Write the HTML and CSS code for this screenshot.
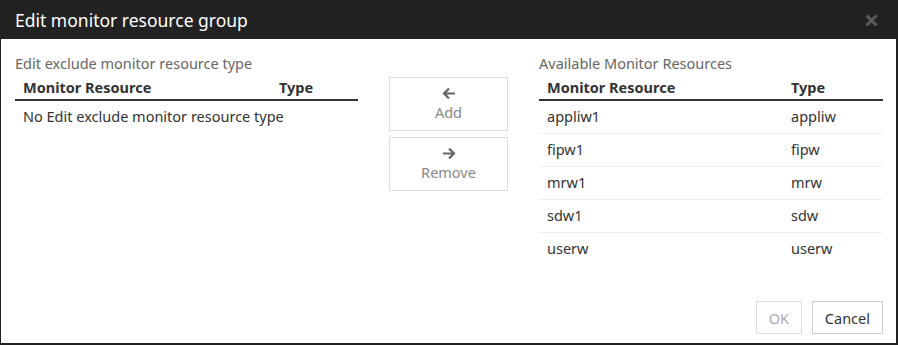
FILE: index.html
```html
<!DOCTYPE html>
<html>
<head>
<meta charset="utf-8">
<link rel="stylesheet" href="styles.css">
</head>
<body>
<div class="dialog">
  <div class="header">
    <span class="title">Edit monitor resource group</span>
    <svg class="close" width="13" height="13" viewBox="0 0 13 13"><path d="M1.5 1.5L11.5 11.5M11.5 1.5L1.5 11.5" stroke="#5a5a5a" stroke-width="3"/></svg>
  </div>
  <div class="body">
    <div class="panel left">
      <div class="label">Edit exclude monitor resource type</div>
      <div class="thead">
        <span class="c1">Monitor Resource</span><span class="c2">Type</span>
      </div>
      <div class="empty">No Edit exclude monitor resource type</div>
    </div>
    <div class="mid">
      <button class="mv">
        <svg class="arrow" width="14" height="13" viewBox="0 0 14 13"><path d="M13 6.5H2M7 1.5L2 6.5L7 11.5" fill="none" stroke="#666" stroke-width="2.2"/></svg>
        <span>Add</span>
      </button>
      <button class="mv">
        <svg class="arrow" width="14" height="13" viewBox="0 0 14 13"><path d="M1 6.5H12M7 1.5L12 6.5L7 11.5" fill="none" stroke="#666" stroke-width="2.2"/></svg>
        <span>Remove</span>
      </button>
    </div>
    <div class="panel right">
      <div class="label">Available Monitor Resources</div>
      <div class="thead">
        <span class="c1">Monitor Resource</span><span class="c2">Type</span>
      </div>
      <div class="row"><span class="c1">appliw1</span><span class="c2">appliw</span></div>
      <div class="row"><span class="c1">fipw1</span><span class="c2">fipw</span></div>
      <div class="row"><span class="c1">mrw1</span><span class="c2">mrw</span></div>
      <div class="row"><span class="c1">sdw1</span><span class="c2">sdw</span></div>
      <div class="row last"><span class="c1">userw</span><span class="c2">userw</span></div>
    </div>
  </div>
  <div class="footer">
    <button class="btn disabled">OK</button>
    <button class="btn">Cancel</button>
  </div>
</div>
</body>
</html>
```

FILE: styles.css
```css
* { box-sizing: border-box; }
html, body { margin: 0; padding: 0; background: #fff; }
body {
  font-family: "Noto Sans", "Open Sans", sans-serif;
  color: #333;
}
.dialog {
  width: 898px;
  height: 345px;
  border: 1px solid #222;
  border-width: 1px 2px 2px 1px;
  display: flex;
  flex-direction: column;
}
.header {
  height: 38px;
  background: #222;
  display: flex;
  align-items: center;
  justify-content: space-between;
  padding: 0 18px 0 14px;
}
.title {
  color: #fff;
  font-size: 17.5px;
  line-height: 20px;
  margin-top: -1px;
}
.close { display: block; margin-top: 1px; }
.body {
  display: flex;
  padding: 14px 13px 0 14px;
  flex: 1;
}
.panel.left { width: 344px; }
.panel.right { width: 345px; }
.label {
  font-size: 14.5px;
  color: #666;
  height: 20px;
  line-height: 20px;
}
.thead {
  display: flex;
  font-size: 14.5px;
  font-weight: bold;
  height: 28px;
  line-height: 28px;
  border-bottom: 2px solid #333;
}
.thead .c1, .row .c1 { padding-left: 8px; }
.left .c1 { width: 264px; }
.right .c1 { width: 252px; }
.empty {
  font-size: 14.5px;
  padding-left: 8px;
  height: 33px;
  line-height: 31px;
}
.row {
  display: flex;
  font-size: 14.5px;
  height: 33px;
  line-height: 31px;
  border-bottom: 1px solid #eee;
}
.row.last { border-bottom: none; }
.mid {
  width: 119px;
  margin: 24px 31px 0 31px;
  display: flex;
  flex-direction: column;
  gap: 6px;
}
.mv {
  width: 119px;
  height: 54px;
  border: 1px solid #ddd;
  background: #fff;
  display: flex;
  flex-direction: column;
  align-items: center;
  justify-content: center;
  gap: 2px;
  padding: 0;
  font-family: inherit;
  font-size: 14.5px;
  color: #888;
}
.arrow { display: block; flex-shrink: 0; width: 14px; height: 13px; }
.footer {
  display: flex;
  justify-content: flex-end;
  gap: 10px;
  padding: 0 13px 9px 0;
}
.btn {
  height: 33px;
  border: 1px solid #ccc;
  background: #fff;
  font-family: inherit;
  font-size: 14.5px;
  color: #333;
  padding: 0 12px;
}
.btn.disabled {
  color: #aaa;
  border-color: #ddd;
  width: 46px;
  padding: 0;
}
```
